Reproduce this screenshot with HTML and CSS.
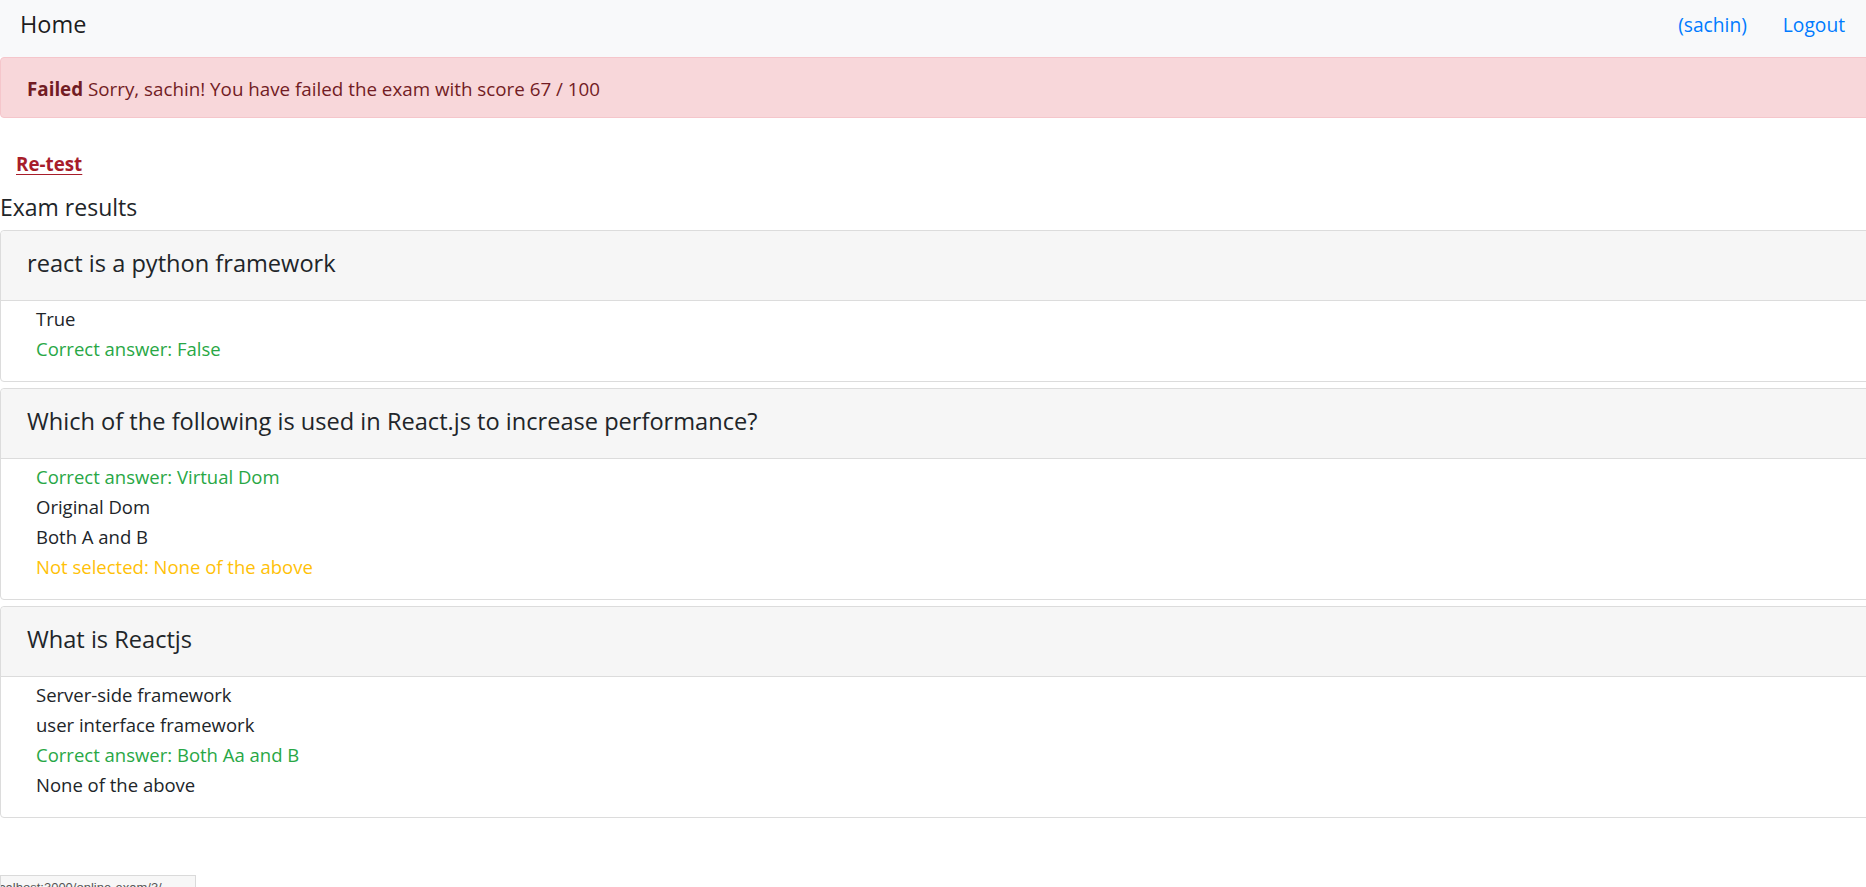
FILE: index.html
```html
<!DOCTYPE html>
<html lang="en">
<head>
<meta charset="utf-8">
<title>Exam result</title>
<link rel="stylesheet" href="styles.css">
</head>
<body>
<nav class="navbar">
  <a class="brand" href="#">Home</a>
  <div class="nav-links">
    <a class="nav-link" href="#">(sachin)</a>
    <a class="nav-link" href="#">Logout</a>
  </div>
</nav>
<main class="main">
  <div class="alert"><strong>Failed</strong> Sorry, sachin! You have failed the exam with score 67 / 100</div>
  <div class="retest-row"><a class="retest" href="#">Re-test</a></div>
  <h4 class="section-title">Exam results</h4>

  <div class="card">
    <div class="card-header">react is a python framework</div>
    <div class="card-body">
      <div class="opt">True</div>
      <div class="opt correct">Correct answer: False</div>
    </div>
  </div>

  <div class="card">
    <div class="card-header">Which of the following is used in React.js to increase performance?</div>
    <div class="card-body">
      <div class="opt correct">Correct answer: Virtual Dom</div>
      <div class="opt">Original Dom</div>
      <div class="opt">Both A and B</div>
      <div class="opt missed">Not selected: None of the above</div>
    </div>
  </div>

  <div class="card">
    <div class="card-header">What is Reactjs</div>
    <div class="card-body">
      <div class="opt">Server-side framework</div>
      <div class="opt">user interface framework</div>
      <div class="opt correct">Correct answer: Both Aa and B</div>
      <div class="opt">None of the above</div>
    </div>
  </div>
</main>
<div class="status-bar"><span>localhost:3000/online-exam/3/</span></div>
</body>
</html>
```
FILE: styles.css
```css
html, body {
  margin: 0;
  padding: 0;
}
body {
  font-family: "Open Sans", "Noto Sans", sans-serif;
  font-size: 18.5px;
  color: #212529;
  background: #fff;
  overflow-x: hidden;
}
a { text-decoration: none; }

.navbar {
  height: 57px;
  box-sizing: border-box;
  background: #f8f9fa;
  display: flex;
  align-items: center;
  justify-content: space-between;
  padding: 0 21px 9px 20px;
}
.brand {
  font-size: 23.5px;
  color: rgba(0, 0, 0, 0.9);
}
.nav-links {
  display: flex;
  gap: 36px;
}
.nav-link {
  font-size: 19.2px;
  color: #007bff;
}

.main {
  width: calc(100% + 10px);
}

.alert {
  box-sizing: border-box;
  height: 61px;
  display: flex;
  align-items: center;
  padding: 2px 26px 0;
  background: #f8d7da;
  border: 1px solid #f5c6cb;
  border-radius: 4px;
  color: #721c24;
  font-size: 18.8px;
  white-space: pre;
}
.alert strong { font-weight: 700; }

.retest-row {
  padding: 34px 0 0 16px;
  height: 24px;
  line-height: 24px;
}
.retest {
  font-weight: 700;
  font-size: 18.8px;
  color: #a71d2a;
  text-decoration: underline;
  text-underline-offset: 3px;
}

.section-title {
  margin: 17px 0 9px;
  font-weight: 400;
  font-size: 23px;
  line-height: 28px;
}

.card {
  border: 1px solid #dcdcdc;
  border-radius: 4px;
  margin-bottom: 6px;
  background: #fff;
}
.card-header {
  height: 70px;
  box-sizing: border-box;
  display: flex;
  align-items: center;
  padding: 0 26px 5px;
  background: #f6f6f6;
  border-bottom: 1px solid #dcdcdc;
  border-radius: 4px 4px 0 0;
  font-size: 23.6px;
}
.card-body {
  padding: 3px 35px 17px;
}
.opt {
  font-size: 18.5px;
  line-height: 30px;
}
.opt.correct { color: #28a745; }
.opt.missed { color: #ffc107; }

.status-bar {
  position: fixed;
  left: 0;
  bottom: 0;
  width: 196px;
  height: 12px;
  box-sizing: border-box;
  overflow: hidden;
  background: #f7f7f7;
  border: 1px solid #dadada;
  border-bottom: 0;
  font-family: "Liberation Sans", Arial, sans-serif;
  font-size: 13px;
  line-height: 16px;
  color: #555;
  padding: 4px 0 0 0;
  white-space: nowrap;
}
.status-bar span {
  margin-left: -12px;
}
```
